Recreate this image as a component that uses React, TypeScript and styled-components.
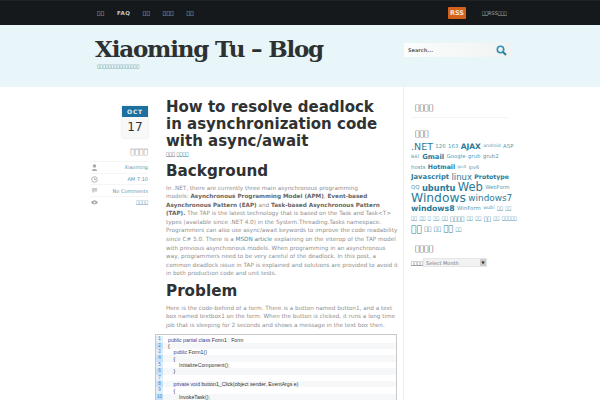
import React from 'react';
import styled, { createGlobalStyle } from 'styled-components';

const Global = createGlobalStyle`
  html, body { margin: 0; padding: 0; background: #fff; }
  body { width: 600px; height: 400px; overflow: hidden; font-family: "DejaVu Sans", sans-serif; }
`;

// the page's CJK text has no glyph in the reference: it shows as missing-glyph boxes
const box = (n: number) => '\uE000'.repeat(n);

const TopBar = styled.div`
  height: 25px;
  background: #15191c;
  border-top: 1px solid #1d2225;
  box-sizing: border-box;
  display: flex;
  padding-left: 97px;
  align-items: center;
`;

const Nav = styled.nav`
  display: flex;
  width: 351px;
  gap: 12.6px;
  align-items: center;
`;

const NavItem = styled.span`
  color: #c4c8ca;
  font-size: 5.5px;
  font-weight: 700;
  letter-spacing: 0.4px;
`;

const RssBadge = styled.span`
  width: 18px;
  height: 12px;
  background: #d2621c;
  color: #f3e6da;
  font-size: 6.5px;
  font-weight: 700;
  display: flex;
  align-items: center;
  justify-content: center;
  border-radius: 1px;
`;

const RssText = styled.span`
  color: #a9adaf;
  font-size: 5px;
  margin-left: 16px;
`;

const Header = styled.header`
  height: 62px;
  background: #e9f6f9;
  display: flex;
  justify-content: space-between;
  padding: 9px 90px 0 95px;
  box-sizing: border-box;
`;

const Brand = styled.div`
  display: flex;
  flex-direction: column;
`;

const SiteTitle = styled.h1`
  margin: 0;
  font-family: "DejaVu Serif", serif;
  font-size: 23px;
  line-height: 30px;
  font-weight: 700;
  letter-spacing: -1.2px;
  color: #2e3132;
`;

const Tagline = styled.div`
  color: #3f7f93;
  font-size: 4.7px;
  line-height: 6px;
  margin: 0 0 0 2px;
`;

const SearchBox = styled.div`
  width: 107px;
  height: 14px;
  margin-top: 9px;
  margin-right: -1px;
  background: linear-gradient(90deg, #fbfdfd, #f1f3f3);
  display: flex;
  align-items: center;
  justify-content: space-between;
  padding: 0 4px;
  box-sizing: border-box;
  color: #666;
  font-size: 5px;
  font-weight: 700;
`;

const Layout = styled.div`
  display: flex;
  padding-left: 90px;
  height: 313px;
  overflow: hidden;
`;

const Meta = styled.aside`
  width: 58px;
  flex: none;
  display: flex;
  flex-direction: column;
  align-items: flex-end;
  padding-top: 19px;
  box-sizing: border-box;
`;

const DateCard = styled.div`
  width: 26px;
  box-shadow: 0 0 2px #ddd;
`;

const Month = styled.div`
  height: 11px;
  background: #1c6f9e;
  color: #e9f2f6;
  font-size: 6px;
  font-weight: 700;
  letter-spacing: 0.8px;
  text-align: center;
  line-height: 11px;
`;

const Day = styled.div`
  height: 21px;
  background: #f8f8f8;
  color: #333;
  font-size: 12px;
  text-align: center;
  line-height: 21px;
`;

const MetaTitle = styled.div`
  width: 100%;
  text-align: right;
  color: #888;
  font-size: 7.4px;
  line-height: 9px;
  margin: 8.5px 0 5.5px;
`;

const MetaRow = styled.div`
  width: 100%;
  height: 11.7px;
  display: flex;
  justify-content: space-between;
  align-items: center;
  padding-left: 1px;
  box-sizing: border-box;
  color: #5b9ab2;
  font-size: 5px;
  border-top: 1px solid #f5f5f5;
`;

const Main = styled.main`
  width: 231px;
  margin-left: 18px;
  flex: none;
  padding-top: 12px;
`;

const PostTitle = styled.h2`
  margin: 0;
  color: #2f3233;
  font-size: 15px;
  line-height: 17px;
  font-weight: 700;
`;

const PostMeta = styled.div`
  margin-top: 1px;
  color: #666;
  font-size: 5px;
  line-height: 7px;
  & b { color: #2d7d9a; font-weight: 400; }
`;

const Heading = styled.h3`
  margin: 4px 0 2.5px;
  color: #2f3233;
  font-size: 15.2px;
  line-height: 19px;
  font-weight: 700;
`;

const Para = styled.p`
  margin: 0;
  color: #8f8f8f;
  font-size: 5.7px;
  line-height: 8.6px;
  white-space: nowrap;
  & b { color: #666; font-weight: 700; }
  & a { color: #3f8cab; }
`;

const CodeBlock = styled.div`
  width: 242px;
  margin: 5px 0 0 -11px;
  border: 1px solid #c8c8c8;
  box-sizing: border-box;
  padding: 1px 0 0 0;
`;

const CodeLine = styled.div<{ $odd: boolean }>`
  height: 6.4px;
  display: flex;
  align-items: center;
  background: ${p => (p.$odd ? '#fff' : '#f6f7f8')};
  font-family: "Liberation Sans", sans-serif;
  font-size: 5.2px;
  color: #333;
`;

const LineNo = styled.span<{ $odd: boolean }>`
  width: 7px;
  flex: none;
  height: 100%;
  margin-right: 5px;
  text-align: center;
  color: #3a7fc0;
  font-size: 4.5px;
  line-height: 6.4px;
  background: ${p => (p.$odd ? '#e2effa' : '#c9e1f7')};
`;

const CodeText = styled.span<{ $indent: number }>`
  padding-left: ${p => p.$indent * 5.5}px;
  white-space: pre;
`;

const Kw = styled.span`
  color: #3a3a9a;
`;

const Sidebar = styled.aside`
  width: 115px;
  margin-left: 6px;
  flex: none;
  border-left: 1px solid #eef0f0;
  padding: 16px 0 0 7px;
  box-sizing: border-box;
  display: flex;
  flex-direction: column;
`;

const WidgetTitle = styled.div`
  color: #444;
  font-size: 7.6px;
  line-height: 9px;
  padding: 0 0 5px 4px;
  margin-bottom: 11px;
  border-bottom: 1px solid #f3f3f3;
  width: 92px;
`;

const CloudTitle = styled.div`
  color: #444;
  font-size: 7.6px;
  line-height: 9px;
  padding-left: 4px;
`;

const Cloud = styled.div`
  margin-top: 3.5px;
  display: flex;
  flex-direction: column;
`;

const CloudRow = styled.div`
  height: 10.3px;
  display: flex;
  align-items: center;
  gap: 2.4px;
  white-space: nowrap;
`;

const Tag = styled.span<{ $s: number; $b?: boolean }>`
  font-size: ${p => p.$s}px;
  line-height: 1;
  color: ${p => (p.$s < 6 && !p.$b ? '#5b9ab2' : '#2a7a99')};
  font-weight: ${p => (p.$b ? 700 : 400)};
`;

const ArchiveTitle = styled(CloudTitle)`
  margin-top: 10px;
`;

const ArchiveRow = styled.div`
  display: flex;
  align-items: center;
  margin-top: 5px;
  color: #555;
  font-size: 5px;
`;

const MonthSelect = styled.div`
  width: 64px;
  height: 9px;
  display: flex;
  align-items: center;
  justify-content: space-between;
  padding-left: 2px;
  box-sizing: border-box;
  background: #f2f2f2;
  border: 1px solid #e6e6e6;
  color: #777;
  font-size: 5px;
`;

const SelectArrow = styled.span`
  width: 6px;
  height: 7px;
  background: #ccc;
  color: #222;
  font-size: 4px;
  line-height: 7px;
  text-align: center;
`;

const Icon = styled.svg`
  width: 7px;
  height: 7px;
  fill: #aaa;
`;

const code: [number, React.ReactNode][] = [
  [0, <><Kw>public partial class</Kw> Form1 : Form</>],
  [0, '{'],
  [1, <><Kw>public</Kw> Form1()</>],
  [1, '{'],
  [2, 'InitializeComponent();'],
  [1, '}'],
  [0, ''],
  [1, <><Kw>private void</Kw> button1_Click(object sender, EventArgs e)</>],
  [1, '{'],
  [2, 'InvokeTask();'],
];

const tagRows: [string, number, boolean?][][] = [
  [['.NET', 9.5], ['126', 5.4], ['163', 5.4], ['AJAX', 7.5, true], ['android', 4.6], ['ASP', 5.4]],
  [['BAT', 4.6], ['Gmail', 6.8, true], ['Google', 5.4], ['grub', 5.4], ['grub2', 5.4]],
  [['hosts', 5.4], ['Hotmail', 6.2, true], ['ipv4', 4], ['ipv6', 5]],
  [['Javascript', 6.8, true], ['linux', 8.5], ['Prototype', 6.2, true]],
  [['QQ', 5.4], ['ubuntu', 8.3, true], ['Web', 11.5], ['WebForm', 5.2]],
  [['Windows', 12.3], ['windows7', 8.9]],
  [['windows8', 7.8, true], ['WinForm', 5.4], ['wubi', 4.8], [box(2), 5], [box(2), 5]],
  [[box(2), 5], [box(2), 5], [box(1), 5], [box(2), 5], [box(2), 5], [box(4), 6], [box(2), 5], [box(2), 5], [box(2), 6], [box(2), 5], [box(5), 5]],
  [[box(2), 9], [box(2), 6], [box(2), 6], [box(2), 8], [box(2), 5]],
];

export default function App() {
  return (
    <>
      <Global />
      <TopBar>
        <Nav>
          <NavItem>{box(2)}</NavItem>
          <NavItem>FAQ</NavItem>
          <NavItem>{box(2)}</NavItem>
          <NavItem>{box(3)}</NavItem>
          <NavItem>{box(2)}</NavItem>
        </Nav>
        <RssBadge>RSS</RssBadge>
        <RssText>{box(2)}RSS{box(3)}</RssText>
      </TopBar>
      <Header>
        <Brand>
          <SiteTitle>Xiaoming Tu – Blog</SiteTitle>
          <Tagline>{box(15)}</Tagline>
        </Brand>
        <SearchBox>
          Search...
          <svg width="11" height="11" viewBox="0 0 11 11">
            <circle cx="4.5" cy="4.5" r="3.2" fill="none" stroke="#2c93b4" strokeWidth="1.6" />
            <path d="M7 7l3 3" stroke="#2c7f9a" strokeWidth="2" />
          </svg>
        </SearchBox>
      </Header>
      <Layout>
        <Meta>
          <DateCard>
            <Month>OCT</Month>
            <Day>17</Day>
          </DateCard>
          <MetaTitle>{box(4)}</MetaTitle>
          <MetaRow>
            <Icon viewBox="0 0 8 8"><circle cx="4" cy="2.2" r="2" /><path d="M1 8c0-3 6-3 6 0z" /></Icon>
            Xiaoming
          </MetaRow>
          <MetaRow>
            <Icon viewBox="0 0 8 8"><circle cx="4" cy="4" r="3.2" fill="none" stroke="#aaa" /><path d="M4 2v2h2" fill="none" stroke="#aaa" /></Icon>
            AM 7:10
          </MetaRow>
          <MetaRow>
            <Icon viewBox="0 0 8 8"><path d="M1 1h6v4H4L2 7V5H1z" fill="#ccc" /></Icon>
            No Comments
          </MetaRow>
          <MetaRow>
            <Icon viewBox="0 0 8 8"><path d="M0 4c2-3 6-3 8 0-2 3-6 3-8 0z" /><circle cx="4" cy="4" r="1" fill="#fff" /></Icon>
            {box(4)}
          </MetaRow>
        </Meta>
        <Main>
          <PostTitle>How to resolve deadlock<br />in asynchronization code<br />with async/await</PostTitle>
          <PostMeta>{box(3)} <b>{box(4)}</b></PostMeta>
          <Heading>Background</Heading>
          <Para>
            In .NET, there are currently three main asynchronous programming<br />
            models: <b>Asynchronous Programming Model (APM)</b>, <b>Event-based</b><br />
            <b>Asynchronous Pattern (EAP)</b> and <b>Task-based Asynchronous Pattern</b><br />
            <b>(TAP).</b> The TAP is the latest technology that is based on the Task and Task&lt;T&gt;<br />
            types (available since .NET 4.0) in the System.Threading.Tasks namespace.<br />
            Programmers can also use async/await keywords to improve the code readability<br />
            since C# 5.0. There is a <a>MSDN article</a> explaining on the interop of the TAP model<br />
            with previous asynchronous models. When programming in an asynchronous<br />
            way, programmers need to be very careful of the deadlock. In this post, a<br />
            common deadlock issue in TAP is explained and solutions are provided to avoid it<br />
            in both production code and unit tests.
          </Para>
          <Heading>Problem</Heading>
          <Para>
            Here is the code-behind of a form. There is a button named button1, and a text<br />
            box named textbox1 on the form. When the button is clicked, it runs a long time<br />
            job that is sleeping for 2 seconds and shows a message in the text box then.
          </Para>
          <CodeBlock>
            {code.map(([indent, text], i) => (
              <CodeLine key={i} $odd={i % 2 === 0}>
                <LineNo $odd={i % 2 === 0}>{i + 1}</LineNo>
                <CodeText $indent={indent}>{text}</CodeText>
              </CodeLine>
            ))}
          </CodeBlock>
        </Main>
        <Sidebar>
          <WidgetTitle>{box(4)}</WidgetTitle>
          <CloudTitle>{box(3)}</CloudTitle>
          <Cloud>
            {tagRows.map((row, r) => (
              <CloudRow key={r}>
                {row.map(([t, s, b], i) => <Tag key={i} $s={s} $b={b}>{t}</Tag>)}
              </CloudRow>
            ))}
          </Cloud>
          <ArchiveTitle>{box(4)}</ArchiveTitle>
          <ArchiveRow>
            {box(4)}
            <MonthSelect>Select Month<SelectArrow>▼</SelectArrow></MonthSelect>
          </ArchiveRow>
        </Sidebar>
      </Layout>
    </>
  );
}
